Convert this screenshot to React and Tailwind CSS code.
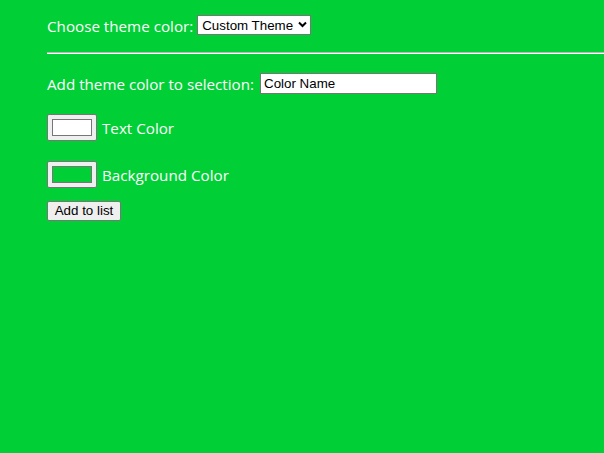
import { useState } from 'react'

function ColorSwatch({ color }) {
    return (
        <div className="w-[50px] h-[27px] bg-[#efefef] border border-[#767676] rounded-[2px] flex items-center justify-center">
            <div className="w-[40px] h-[17px] border border-[#767676]" style={{ backgroundColor: color }}></div>
        </div>
    )
}

export default function App() {
    const [name, setName] = useState("Color Name")

    return (
        <div className="min-h-[453px] w-full bg-[#00cf35] text-white overflow-hidden" style={{ fontFamily: '"Open Sans", sans-serif' }}>
            <div className="pl-[47px] flex flex-col">
                <div className="flex items-center h-[20px] mt-[15px] text-[15.2px]">
                    <span className="mr-[4px] pt-[2px]">Choose theme color:</span>
                    <div className="relative">
                        <select className="h-[20px] w-[114px] bg-white text-black border border-[#767676] text-[13.33px] pl-[4px] rounded-none appearance-none block" style={{ fontFamily: '"Liberation Sans", Arial, sans-serif' }}>
                            <option>Custom Theme</option>
                        </select>
                        <svg className="absolute right-[4px] top-[6px] pointer-events-none" width="9" height="7" viewBox="0 0 9 7">
                            <path d="M1 1.5 L4.5 5 L8 1.5" fill="none" stroke="#000" strokeWidth="2" />
                        </svg>
                    </div>
                </div>
                <hr className="mt-[17px] h-0 border-t border-b border-t-[#b8b8b8] border-b-white" />
                <div className="flex items-center h-[21px] mt-[19px] text-[15.2px]">
                    <span className="mr-[6px] pt-[2px]">Add theme color to selection:</span>
                    <input
                        type="text"
                        value={name}
                        onChange={e => setName(e.target.value)}
                        className="h-[21px] w-[177px] bg-white text-black border border-[#767676] text-[13.33px] px-[3px]"
                        style={{ fontFamily: '"Liberation Sans", Arial, sans-serif' }}
                    />
                </div>
                <div className="flex items-center mt-[20px] text-[15.2px]">
                    <ColorSwatch color="#ffffff" />
                    <span className="ml-[5px] pt-[2px]">Text Color</span>
                </div>
                <div className="flex items-center mt-[20px] text-[15.2px]">
                    <ColorSwatch color="#00cf35" />
                    <span className="ml-[5px] pt-[2px]">Background Color</span>
                </div>
                <div className="mt-[9px]">
                    <button className="h-[20px] w-[74px] bg-[#efefef] text-black border border-[#767676] rounded-[2px] text-[13.33px] leading-none" style={{ fontFamily: '"Liberation Sans", Arial, sans-serif' }}>
                        Add to list
                    </button>
                </div>
            </div>
        </div>
    )
}
